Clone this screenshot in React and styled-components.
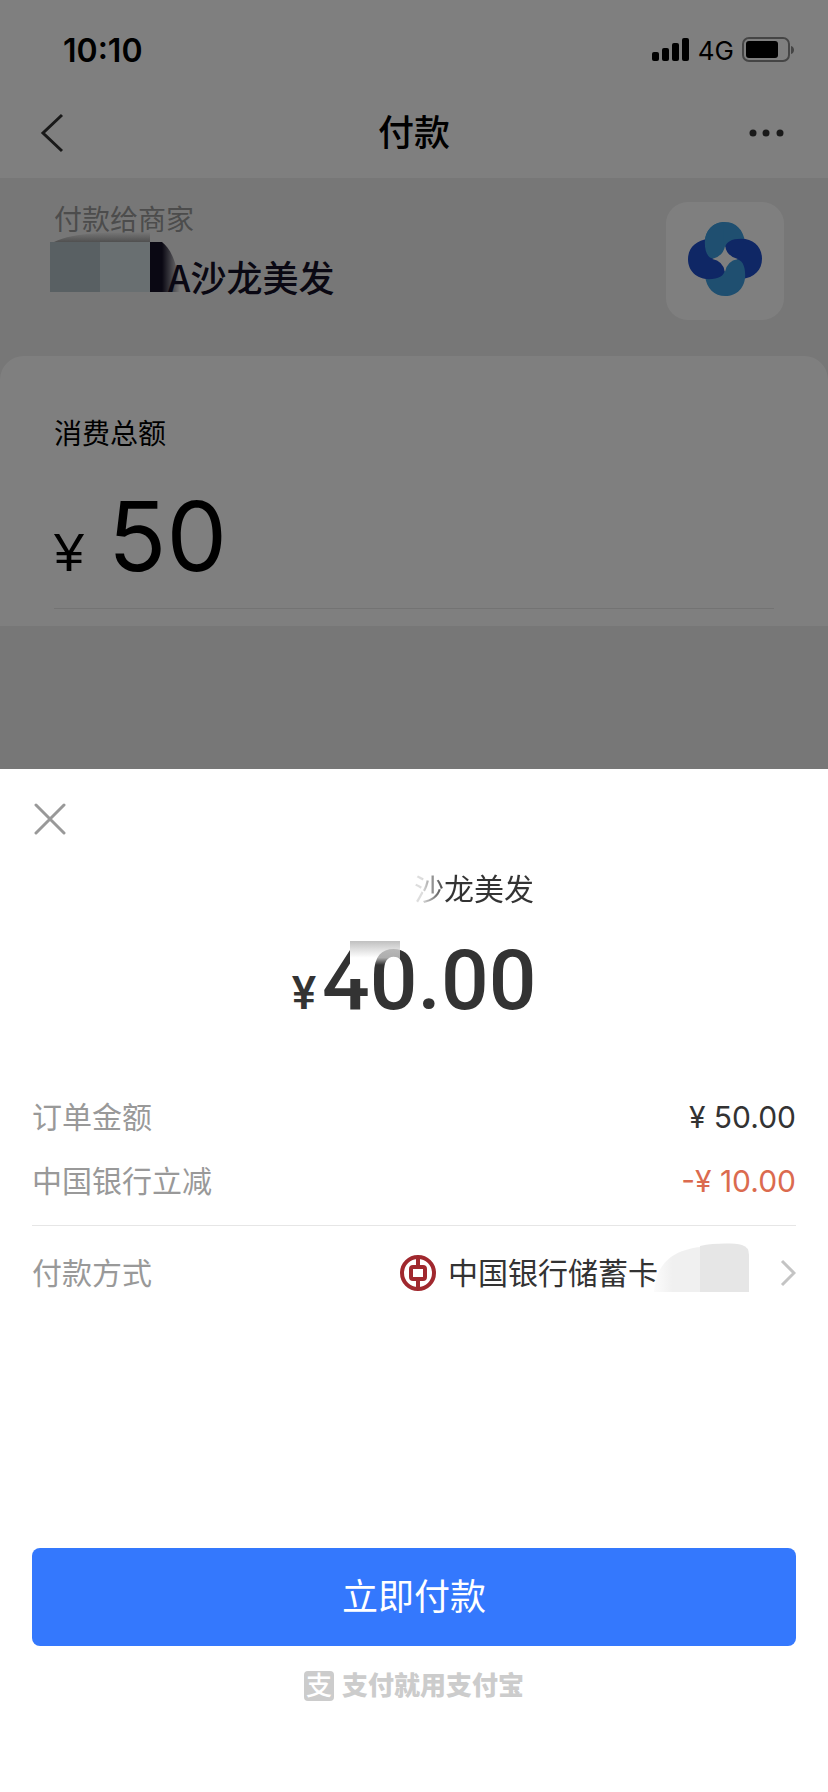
import React from "react"
import styled, { createGlobalStyle, ThemeProvider } from "styled-components"

const theme = {
  color: {
    white: "#ffffff",
    ink: "#333333",
    gray: "#999999",
    page: "#efefef",
    line: "#e6e6e6",
    blue: "#3478fd",
    orange: "#db6b4f",
    mark: "#cccccc",
  },
  font: {
    text: `Inter, "Noto Sans CJK SC", sans-serif`,
    chinese: `"Noto Sans CJK SC", sans-serif`,
    sign: `"Liberation Sans", "Noto Sans CJK SC", sans-serif`,
    amount: `Roboto, "Noto Sans CJK SC", sans-serif`,
  },
}

const GlobalStyle = createGlobalStyle`
  * {
    box-sizing: border-box;
  }
  body {
    margin: 0;
    background: #ffffff;
    font-family: ${theme.font.text};
  }
  h1, h2, p, dl, dd {
    margin: 0;
    font-weight: 400;
  }
`

const petal =
  "M109 0C142 0 165 22 170 62L126 74H111C110 92 97 109 77 109C60 109 50 90 50 62C50 25 75 0 109 0Z"

function StatusBar() {
  return (
    <Status>
      <Time>10:10</Time>
      <Signals>
        <svg width="38" height="24" viewBox="0 0 38 24" aria-hidden="true">
          <rect x="0" y="14" width="7" height="9" rx="2" />
          <rect x="10" y="10" width="7" height="13" rx="2" />
          <rect x="20" y="5" width="7" height="18" rx="2" />
          <rect x="30" y="0" width="7" height="23" rx="2" />
        </svg>
        <Network>4G</Network>
        <svg width="54" height="26" viewBox="0 0 54 26" aria-hidden="true">
          <rect x="1" y="1" width="46" height="23" rx="6" fill="none" stroke="#8a8a8a" strokeWidth="2" />
          <rect x="4" y="4" width="32" height="17" rx="3" />
          <path d="M49 9C53 10 53 16 49 17Z" fill="#8a8a8a" />
        </svg>
      </Signals>
    </Status>
  )
}

function MerchantLogo() {
  return (
    <svg width="74" height="74" viewBox="0 0 220 220" aria-hidden="true">
      <defs>
        <clipPath id="head">
          <rect x="0" y="0" width="105" height="220" />
        </clipPath>
      </defs>
      <path d={petal} fill="#3e9fe0" />
      <path d={petal} fill="#1e4ecb" transform="rotate(90 110 110)" />
      <path d={petal} fill="#3e9fe0" transform="rotate(180 110 110)" />
      <path d={petal} fill="#1e4ecb" transform="rotate(270 110 110)" />
      <path d={petal} fill="#3e9fe0" clipPath="url(#head)" />
      <path
        d="M110 72Q116 102 148 110Q116 116 110 148Q104 116 72 110Q104 102 110 72Z"
        fill="#ffffff"
      />
    </svg>
  )
}

function NameMosaic() {
  return (
    <Mosaic width="132" height="60" viewBox="0 0 132 60" aria-hidden="true">
      <defs>
        <linearGradient id="shade" x1="0" y1="0" x2="0" y2="1">
          <stop offset="0" stopColor="#a0a0a0" stopOpacity="0" />
          <stop offset="1" stopColor="#a0a0a0" />
        </linearGradient>
        <linearGradient id="ink" x1="0" y1="0" x2="1" y2="0">
          <stop offset="0.4" stopColor="#141026" />
          <stop offset="1" stopColor="#141026" stopOpacity="0" />
        </linearGradient>
      </defs>
      <path d="M4 10C24 0 60 0 100 0V10Z" fill="url(#shade)" />
      <path d="M0 10H50V60H0Z" fill="#b3c0c6" />
      <path d="M50 10H100V60H50Z" fill="#d3dfe3" />
      <path d="M100 10H112C120 16 128 30 130 60H100Z" fill="url(#ink)" />
    </Mosaic>
  )
}

function BankLogo() {
  return (
    <svg width="36" height="36" viewBox="0 0 36 36" fill="none" stroke="#a0282e" aria-hidden="true">
      <circle cx="18" cy="18" r="16" strokeWidth="4" />
      <rect x="11" y="12" width="14" height="12" rx="2" strokeWidth="4" />
      <path d="M18 2V12M18 24V34" strokeWidth="4" />
    </svg>
  )
}

function CardMosaic() {
  return (
    <CardMask width="96" height="50" viewBox="0 0 96 50" aria-hidden="true">
      <defs>
        <linearGradient id="fog" x1="0" y1="0" x2="1" y2="0">
          <stop offset="0" stopColor="#f2f2f2" stopOpacity="0.3" />
          <stop offset="0.4" stopColor="#f0f0f0" />
        </linearGradient>
      </defs>
      <path d="M0 49C2 24 14 8 46 4V49Z" fill="url(#fog)" />
      <path d="M46 3C60 0 80 0 88 2Q95 4 95 12V49H46Z" fill="#e6e6e6" />
    </CardMask>
  )
}

function App() {
  return (
    <ThemeProvider theme={theme}>
      <GlobalStyle />
      <Behind>
        <StatusBar />
        <Nav>
          <IconButton aria-label="返回">
            <svg width="24" height="40" viewBox="0 0 24 40" fill="none" stroke="#333" strokeWidth="3">
              <path d="M22 2L3 20L22 38" />
            </svg>
          </IconButton>
          <NavTitle>付款</NavTitle>
          <IconButton $end aria-label="更多">
            <svg width="40" height="8" viewBox="0 0 40 8" fill="#333">
              <circle cx="5" cy="4" r="3.5" />
              <circle cx="18" cy="4" r="3.5" />
              <circle cx="32" cy="4" r="3.5" />
            </svg>
          </IconButton>
        </Nav>
        <Merchant>
          <MerchantInfo>
            <PayTo>付款给商家</PayTo>
            <NameRow>
              <NameMosaic />
              <MerchantName>A沙龙美发</MerchantName>
            </NameRow>
          </MerchantInfo>
          <LogoTile>
            <MerchantLogo />
          </LogoTile>
        </Merchant>
        <TotalCard>
          <TotalLabel>消费总额</TotalLabel>
          <Total>
            <TotalSign>¥</TotalSign>
            <span>50</span>
          </Total>
        </TotalCard>
      </Behind>
      <Sheet>
        <CloseButton aria-label="关闭">
          <svg width="32" height="32" viewBox="0 0 32 32" stroke="#999" strokeWidth="3" strokeLinecap="round">
            <path d="M2 2L30 30M30 2L2 30" />
          </svg>
        </CloseButton>
        <Payee>沙龙美发</Payee>
        <Amount>
          <AmountSign>¥</AmountSign>
          <AmountValue>40.00</AmountValue>
        </Amount>
        <Details>
          <Row>
            <Label>订单金额</Label>
            <Value>¥ 50.00</Value>
          </Row>
          <Row>
            <Label>中国银行立减</Label>
            <Value $discount>-¥ 10.00</Value>
          </Row>
        </Details>
        <Method>
          <Label as="span">付款方式</Label>
          <Card>
            <BankLogo />
            <CardName>中国银行储蓄卡</CardName>
            <CardMosaic />
            <svg width="16" height="28" viewBox="0 0 16 28" fill="none" stroke="#c4c4c4" strokeWidth="3">
              <path d="M2 2L14 14L2 26" />
            </svg>
          </Card>
        </Method>
        <PayButton>立即付款</PayButton>
        <Slogan>
          <SloganMark>支</SloganMark>
          支付就用支付宝
        </Slogan>
      </Sheet>
    </ThemeProvider>
  )
}

const Behind = styled.section`
  position: relative;
  padding-bottom: 143px;
  background: ${props => props.theme.color.page};

  &::after {
    content: "";
    position: absolute;
    inset: 0;
    background: rgba(0, 0, 0, 0.5);
  }
`
const Status = styled.div`
  display: flex;
  justify-content: space-between;
  align-items: center;
  height: 88px;
  padding: 12px 32px 0 63px;
  background: ${props => props.theme.color.white};
`
const Time = styled.span`
  font-size: 32px;
  font-weight: 600;
`
const Signals = styled.div`
  display: flex;
  align-items: center;
  gap: 8px;
`
const Network = styled.span`
  font-size: 26px;
`
const Nav = styled.header`
  display: grid;
  grid-template-columns: 1fr auto 1fr;
  align-items: center;
  height: 90px;
  padding: 0 40px;
  background: ${props => props.theme.color.white};
`
const IconButton = styled.button`
  display: flex;
  align-items: center;
  justify-self: ${props => (props.$end ? "end" : "start")};
  height: 64px;
  padding: 0;
  border: 0;
  background: transparent;
`
const NavTitle = styled.h1`
  font-size: 36px;
  font-weight: 500;
  line-height: 40px;
`
const Merchant = styled.div`
  display: flex;
  justify-content: space-between;
  align-items: flex-start;
  height: 178px;
  padding: 24px 44px 0 50px;
`
const MerchantInfo = styled.div`
  padding-top: 2px;
`
const PayTo = styled.p`
  padding-left: 4px;
  color: ${props => props.theme.color.gray};
  font-size: 28px;
  line-height: 32px;
`
const NameRow = styled.div`
  display: flex;
  align-items: flex-start;
  margin-top: -4px;
`
const Mosaic = styled.svg`
  flex: none;
  margin-right: -14px;
`
const MerchantName = styled.h2`
  padding-top: 24px;
  color: #141026;
  font-family: ${props => props.theme.font.chinese};
  font-size: 36px;
  font-weight: 500;
  line-height: 40px;
`
const LogoTile = styled.div`
  display: flex;
  justify-content: center;
  align-items: center;
  width: 118px;
  height: 118px;
  padding-bottom: 4px;
  border-radius: 22px;
  background: ${props => props.theme.color.white};
`
const TotalCard = styled.div`
  padding: 60px 54px 17px;
  border-radius: 24px 24px 0 0;
  background: ${props => props.theme.color.white};
`
const TotalLabel = styled.p`
  font-size: 28px;
  line-height: 36px;
`
const Total = styled.p`
  display: flex;
  align-items: baseline;
  gap: 24px;
  padding: 26px 0 14px;
  border-bottom: 1px solid ${props => props.theme.color.line};
  font-size: 96px;
  line-height: 116px;
`
const TotalSign = styled.span`
  font-family: ${props => props.theme.font.sign};
  font-size: 54px;
  line-height: 56px;
`
const Sheet = styled.main`
  display: flex;
  flex-direction: column;
  padding: 28px 32px 90px;
  background: ${props => props.theme.color.white};
  color: ${props => props.theme.color.ink};
`
const CloseButton = styled.button`
  display: flex;
  justify-content: center;
  align-items: center;
  width: 36px;
  height: 44px;
  padding: 0;
  border: 0;
  background: transparent;
`
const Payee = styled.h2`
  align-self: center;
  margin-top: 28px;
  padding-left: 120px;
  font-size: 30px;
  line-height: 40px;
  background: linear-gradient(90deg, #dddddd 128px, #333333 152px);
  background-clip: text;
  color: transparent;
`
const Amount = styled.p`
  display: flex;
  justify-content: center;
  align-items: baseline;
  gap: 6px;
  margin-top: 22px;
  font-family: ${props => props.theme.font.amount};
  font-weight: 500;
  line-height: 100px;
`
const AmountSign = styled.span`
  font-size: 46px;
  line-height: 48px;
`
const AmountValue = styled.span`
  position: relative;
  font-size: 84px;

  &::after {
    content: "";
    position: absolute;
    top: 10px;
    left: 28px;
    width: 50px;
    height: 38px;
    background:
      linear-gradient(#c0c0c0, rgba(255, 255, 255, 0.6) 70%, rgba(255, 255, 255, 0)) 0 0 / 50px 24px no-repeat,
      linear-gradient(#ffffff, #ffffff) 0 0 / 14px 38px no-repeat;
  }
`
const Details = styled.dl`
  margin-top: 54px;
  padding-bottom: 12px;
  border-bottom: 1px solid ${props => props.theme.color.line};
`
const Row = styled.div`
  display: flex;
  justify-content: space-between;
  align-items: center;
  height: 64px;
`
const Label = styled.dt`
  color: ${props => props.theme.color.gray};
  font-size: 30px;
  line-height: 32px;
`
const Value = styled.dd`
  color: ${props => (props.$discount ? props.theme.color.orange : props.theme.color.ink)};
  font-size: 30px;
  line-height: 32px;
`
const Method = styled.div`
  display: flex;
  justify-content: space-between;
  align-items: center;
  height: 94px;
`
const Card = styled.div`
  display: flex;
  align-items: center;
`
const CardName = styled.span`
  margin-left: 12px;
  font-size: 30px;
  line-height: 32px;
`
const CardMask = styled.svg`
  margin: 0 30px 10px -4px;
`
const PayButton = styled.button`
  height: 98px;
  margin-top: 228px;
  border: 0;
  border-radius: 8px;
  background: ${props => props.theme.color.blue};
  color: ${props => props.theme.color.white};
  font-family: inherit;
  font-size: 36px;
  line-height: 40px;
`
const Slogan = styled.p`
  display: flex;
  justify-content: center;
  align-items: center;
  gap: 8px;
  margin-top: 24px;
  color: ${props => props.theme.color.mark};
  font-size: 26px;
  font-weight: 900;
  line-height: 32px;
`
const SloganMark = styled.span`
  width: 30px;
  height: 30px;
  border-radius: 4px;
  background: ${props => props.theme.color.mark};
  color: ${props => props.theme.color.white};
  font-size: 26px;
  font-weight: 500;
  line-height: 30px;
  text-align: center;
`
export default App
